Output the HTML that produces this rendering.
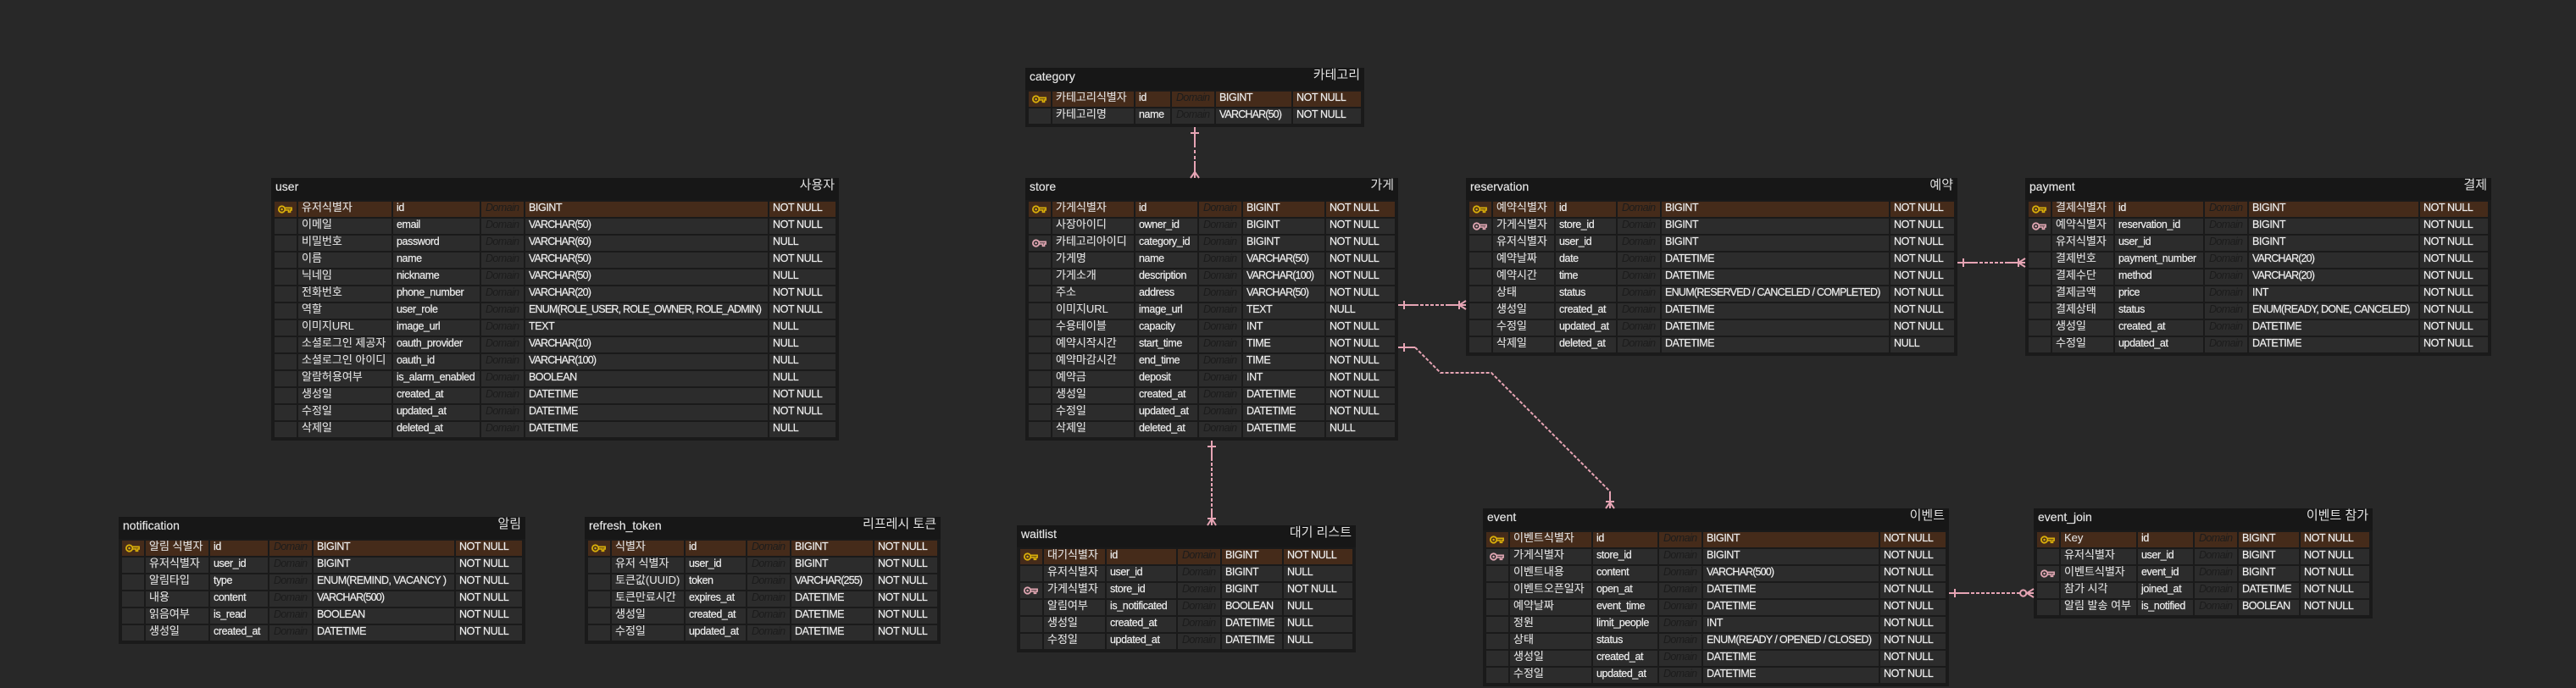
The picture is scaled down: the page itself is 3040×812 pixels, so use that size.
<!DOCTYPE html>
<html lang="ko"><head><meta charset="utf-8"><title>ERD</title>
<style>
html,body{margin:0;padding:0;width:3040px;height:812px;overflow:hidden;background:#282828}
body{position:relative;font-family:"Liberation Sans","Noto Sans CJK KR",sans-serif;color:#e2e2e2}
.e{position:absolute;background:#1a1a1a}
.e>b{position:absolute;left:5px;top:0;font-weight:400;font-size:14px;line-height:20px;color:#e6e6e6;-webkit-text-stroke:.15px #e6e6e6}
.e>i{position:absolute;right:5px;top:-1px;font-style:normal;font-size:15px;line-height:20px;color:#e0e0e0}
.e::before{content:"";position:absolute;left:0;top:0;right:0;height:26px;background:#171717}
.e>b,.e>i{z-index:1}
table{position:absolute;left:2px;top:26px;width:calc(100% - 4px);table-layout:fixed;border-collapse:separate;border-spacing:2px}
td{height:18px;padding:0 0 0 4px;background:#2c2c2c;font-size:12.5px;line-height:14px;letter-spacing:-.4px;white-space:nowrap;overflow:hidden;vertical-align:top;color:#ececec;-webkit-text-stroke:.2px #ececec}
td:nth-child(1){padding:0;position:relative;-webkit-text-stroke:0}
td:nth-child(2){font-size:13px;letter-spacing:0;color:#e0e0e0;-webkit-text-stroke:.1px #e0e0e0}
td:nth-child(4){padding-left:5px;font-style:italic;color:#1c1c1c;letter-spacing:-.6px;-webkit-text-stroke:0}
td.v{letter-spacing:-.85px}
td.a{letter-spacing:-.55px}
tr.p td{background:#452b1a}
td svg{position:absolute;left:4px;top:4px;width:17px;height:10px;display:block}
#ln{position:absolute;left:0;top:0}
</style></head><body>
<svg width="0" height="0" style="position:absolute"><defs>
<g id="k"><circle cx="4.6" cy="5" r="3.7" fill="none" stroke="currentColor" stroke-width="1.8"/><circle cx="4.6" cy="5" r="1.3" fill="currentColor"/><path d="M8.4 3.2H16.2V6H14.6V8.4H12.4V6H8.4" fill="currentColor" fill-opacity=".35" stroke="currentColor" stroke-width="1.5"/></g>
</defs></svg>

<div class="e" style="left:1210px;top:80px;width:400px;height:70px"><b>category</b><i>카테고리</i>
<table><col width="26"><col width="96"><col width="41"><col width="50"><col width="89"><col width="80">
<tr class="p"><td><svg viewBox="0 0 17 10" style="color:#d9ae0a"><use href="#k"/></svg></td><td>카테고리식별자</td><td>id</td><td>Domain</td><td>BIGINT</td><td>NOT NULL</td></tr>
<tr><td></td><td>카테고리명</td><td>name</td><td>Domain</td><td class="v">VARCHAR(50)</td><td>NOT NULL</td></tr>
</table></div>

<div class="e" style="left:320px;top:210px;width:670px;height:310px"><b>user</b><i>사용자</i>
<table><col width="26"><col width="110"><col width="102"><col width="50"><col width="286"><col width="78">
<tr class="p"><td><svg viewBox="0 0 17 10" style="color:#d9ae0a"><use href="#k"/></svg></td><td>유저식별자</td><td>id</td><td>Domain</td><td>BIGINT</td><td>NOT NULL</td></tr>
<tr><td></td><td>이메일</td><td>email</td><td>Domain</td><td class="v">VARCHAR(50)</td><td>NOT NULL</td></tr>
<tr><td></td><td>비밀번호</td><td>password</td><td>Domain</td><td class="v">VARCHAR(60)</td><td>NULL</td></tr>
<tr><td></td><td>이름</td><td>name</td><td>Domain</td><td class="v">VARCHAR(50)</td><td>NOT NULL</td></tr>
<tr><td></td><td>닉네임</td><td>nickname</td><td>Domain</td><td class="v">VARCHAR(50)</td><td>NULL</td></tr>
<tr><td></td><td>전화번호</td><td>phone_number</td><td>Domain</td><td class="v">VARCHAR(20)</td><td>NOT NULL</td></tr>
<tr><td></td><td>역할</td><td>user_role</td><td>Domain</td><td style="letter-spacing:-.79px">ENUM(ROLE_USER, ROLE_OWNER, ROLE_ADMIN)</td><td>NOT NULL</td></tr>
<tr><td></td><td>이미지URL</td><td>image_url</td><td>Domain</td><td>TEXT</td><td>NULL</td></tr>
<tr><td></td><td>소셜로그인 제공자</td><td>oauth_provider</td><td>Domain</td><td class="v">VARCHAR(10)</td><td>NULL</td></tr>
<tr><td></td><td>소셜로그인 아이디</td><td>oauth_id</td><td>Domain</td><td class="v">VARCHAR(100)</td><td>NULL</td></tr>
<tr><td></td><td>알람허용여부</td><td>is_alarm_enabled</td><td>Domain</td><td class="a">BOOLEAN</td><td>NULL</td></tr>
<tr><td></td><td>생성일</td><td>created_at</td><td>Domain</td><td class="a">DATETIME</td><td>NOT NULL</td></tr>
<tr><td></td><td>수정일</td><td>updated_at</td><td>Domain</td><td class="a">DATETIME</td><td>NOT NULL</td></tr>
<tr><td></td><td>삭제일</td><td>deleted_at</td><td>Domain</td><td class="a">DATETIME</td><td>NULL</td></tr>
</table></div>

<div class="e" style="left:1210px;top:210px;width:440px;height:310px"><b>store</b><i>가게</i>
<table><col width="26"><col width="96"><col width="73"><col width="50"><col width="96"><col width="81">
<tr class="p"><td><svg viewBox="0 0 17 10" style="color:#d9ae0a"><use href="#k"/></svg></td><td>가게식별자</td><td>id</td><td>Domain</td><td>BIGINT</td><td>NOT NULL</td></tr>
<tr><td></td><td>사장아이디</td><td>owner_id</td><td>Domain</td><td>BIGINT</td><td>NOT NULL</td></tr>
<tr><td><svg viewBox="0 0 17 10" style="color:#e0a6b2"><use href="#k"/></svg></td><td>카테고리아이디</td><td>category_id</td><td>Domain</td><td>BIGINT</td><td>NOT NULL</td></tr>
<tr><td></td><td>가게명</td><td>name</td><td>Domain</td><td class="v">VARCHAR(50)</td><td>NOT NULL</td></tr>
<tr><td></td><td>가게소개</td><td>description</td><td>Domain</td><td class="v">VARCHAR(100)</td><td>NOT NULL</td></tr>
<tr><td></td><td>주소</td><td>address</td><td>Domain</td><td class="v">VARCHAR(50)</td><td>NOT NULL</td></tr>
<tr><td></td><td>이미지URL</td><td>image_url</td><td>Domain</td><td>TEXT</td><td>NULL</td></tr>
<tr><td></td><td>수용테이블</td><td>capacity</td><td>Domain</td><td>INT</td><td>NOT NULL</td></tr>
<tr><td></td><td>예약시작시간</td><td>start_time</td><td>Domain</td><td>TIME</td><td>NOT NULL</td></tr>
<tr><td></td><td>예약마감시간</td><td>end_time</td><td>Domain</td><td>TIME</td><td>NOT NULL</td></tr>
<tr><td></td><td>예약금</td><td>deposit</td><td>Domain</td><td>INT</td><td>NOT NULL</td></tr>
<tr><td></td><td>생성일</td><td>created_at</td><td>Domain</td><td class="a">DATETIME</td><td>NOT NULL</td></tr>
<tr><td></td><td>수정일</td><td>updated_at</td><td>Domain</td><td class="a">DATETIME</td><td>NOT NULL</td></tr>
<tr><td></td><td>삭제일</td><td>deleted_at</td><td>Domain</td><td class="a">DATETIME</td><td>NULL</td></tr>
</table></div>

<div class="e" style="left:1730px;top:210px;width:580px;height:210px"><b>reservation</b><i>예약</i>
<table><col width="26"><col width="72"><col width="71"><col width="50"><col width="268"><col width="75">
<tr class="p"><td><svg viewBox="0 0 17 10" style="color:#d9ae0a"><use href="#k"/></svg></td><td>예약식별자</td><td>id</td><td>Domain</td><td>BIGINT</td><td>NOT NULL</td></tr>
<tr><td><svg viewBox="0 0 17 10" style="color:#e0a6b2"><use href="#k"/></svg></td><td>가게식별자</td><td>store_id</td><td>Domain</td><td>BIGINT</td><td>NOT NULL</td></tr>
<tr><td></td><td>유저식별자</td><td>user_id</td><td>Domain</td><td>BIGINT</td><td>NOT NULL</td></tr>
<tr><td></td><td>예약날짜</td><td>date</td><td>Domain</td><td class="a">DATETIME</td><td>NOT NULL</td></tr>
<tr><td></td><td>예약시간</td><td>time</td><td>Domain</td><td class="a">DATETIME</td><td>NOT NULL</td></tr>
<tr><td></td><td>상태</td><td>status</td><td>Domain</td><td style="letter-spacing:-.72px">ENUM(RESERVED / CANCELED / COMPLETED)</td><td>NOT NULL</td></tr>
<tr><td></td><td>생성일</td><td>created_at</td><td>Domain</td><td class="a">DATETIME</td><td>NOT NULL</td></tr>
<tr><td></td><td>수정일</td><td>updated_at</td><td>Domain</td><td class="a">DATETIME</td><td>NOT NULL</td></tr>
<tr><td></td><td>삭제일</td><td>deleted_at</td><td>Domain</td><td class="a">DATETIME</td><td>NULL</td></tr>
</table></div>

<div class="e" style="left:2390px;top:210px;width:550px;height:210px"><b>payment</b><i>결제</i>
<table><col width="26"><col width="72"><col width="104"><col width="50"><col width="200"><col width="80">
<tr class="p"><td><svg viewBox="0 0 17 10" style="color:#d9ae0a"><use href="#k"/></svg></td><td>결제식별자</td><td>id</td><td>Domain</td><td>BIGINT</td><td>NOT NULL</td></tr>
<tr><td><svg viewBox="0 0 17 10" style="color:#e0a6b2"><use href="#k"/></svg></td><td>예약식별자</td><td>reservation_id</td><td>Domain</td><td>BIGINT</td><td>NOT NULL</td></tr>
<tr><td></td><td>유저식별자</td><td>user_id</td><td>Domain</td><td>BIGINT</td><td>NOT NULL</td></tr>
<tr><td></td><td>결제번호</td><td>payment_number</td><td>Domain</td><td class="v">VARCHAR(20)</td><td>NOT NULL</td></tr>
<tr><td></td><td>결제수단</td><td>method</td><td>Domain</td><td class="v">VARCHAR(20)</td><td>NOT NULL</td></tr>
<tr><td></td><td>결제금액</td><td>price</td><td>Domain</td><td>INT</td><td>NOT NULL</td></tr>
<tr><td></td><td>결제상태</td><td>status</td><td>Domain</td><td style="letter-spacing:-.7px">ENUM(READY, DONE, CANCELED)</td><td>NOT NULL</td></tr>
<tr><td></td><td>생성일</td><td>created_at</td><td>Domain</td><td class="a">DATETIME</td><td>NOT NULL</td></tr>
<tr><td></td><td>수정일</td><td>updated_at</td><td>Domain</td><td class="a">DATETIME</td><td>NOT NULL</td></tr>
</table></div>

<div class="e" style="left:140px;top:610px;width:480px;height:150px"><b>notification</b><i>알림</i>
<table><col width="26"><col width="74"><col width="68"><col width="50"><col width="166"><col width="78">
<tr class="p"><td><svg viewBox="0 0 17 10" style="color:#d9ae0a"><use href="#k"/></svg></td><td>알림 식별자</td><td>id</td><td>Domain</td><td>BIGINT</td><td>NOT NULL</td></tr>
<tr><td></td><td>유저식별자</td><td>user_id</td><td>Domain</td><td>BIGINT</td><td>NOT NULL</td></tr>
<tr><td></td><td>알림타입</td><td>type</td><td>Domain</td><td style="letter-spacing:-.53px">ENUM(REMIND, VACANCY )</td><td>NOT NULL</td></tr>
<tr><td></td><td>내용</td><td>content</td><td>Domain</td><td class="v">VARCHAR(500)</td><td>NOT NULL</td></tr>
<tr><td></td><td>읽음여부</td><td>is_read</td><td>Domain</td><td class="a">BOOLEAN</td><td>NOT NULL</td></tr>
<tr><td></td><td>생성일</td><td>created_at</td><td>Domain</td><td class="a">DATETIME</td><td>NOT NULL</td></tr>
</table></div>

<div class="e" style="left:690px;top:610px;width:420px;height:150px"><b>refresh_token</b><i>리프레시 토큰</i>
<table><col width="26"><col width="85"><col width="71"><col width="50"><col width="96"><col width="74">
<tr class="p"><td><svg viewBox="0 0 17 10" style="color:#d9ae0a"><use href="#k"/></svg></td><td>식별자</td><td>id</td><td>Domain</td><td>BIGINT</td><td>NOT NULL</td></tr>
<tr><td></td><td>유저 식별자</td><td>user_id</td><td>Domain</td><td>BIGINT</td><td>NOT NULL</td></tr>
<tr><td></td><td>토큰값(UUID)</td><td>token</td><td>Domain</td><td class="v">VARCHAR(255)</td><td>NOT NULL</td></tr>
<tr><td></td><td>토큰만료시간</td><td>expires_at</td><td>Domain</td><td class="a">DATETIME</td><td>NOT NULL</td></tr>
<tr><td></td><td>생성일</td><td>created_at</td><td>Domain</td><td class="a">DATETIME</td><td>NOT NULL</td></tr>
<tr><td></td><td>수정일</td><td>updated_at</td><td>Domain</td><td class="a">DATETIME</td><td>NOT NULL</td></tr>
</table></div>

<div class="e" style="left:1200px;top:620px;width:400px;height:150px"><b>waitlist</b><i>대기 리스트</i>
<table><col width="26"><col width="72"><col width="82"><col width="50"><col width="71"><col width="81">
<tr class="p"><td><svg viewBox="0 0 17 10" style="color:#d9ae0a"><use href="#k"/></svg></td><td>대기식별자</td><td>id</td><td>Domain</td><td>BIGINT</td><td>NOT NULL</td></tr>
<tr><td></td><td>유저식별자</td><td>user_id</td><td>Domain</td><td>BIGINT</td><td>NULL</td></tr>
<tr><td><svg viewBox="0 0 17 10" style="color:#e0a6b2"><use href="#k"/></svg></td><td>가게식별자</td><td>store_id</td><td>Domain</td><td>BIGINT</td><td>NOT NULL</td></tr>
<tr><td></td><td>알림여부</td><td>is_notificated</td><td>Domain</td><td class="a">BOOLEAN</td><td>NULL</td></tr>
<tr><td></td><td>생성일</td><td>created_at</td><td>Domain</td><td class="a">DATETIME</td><td>NULL</td></tr>
<tr><td></td><td>수정일</td><td>updated_at</td><td>Domain</td><td class="a">DATETIME</td><td>NULL</td></tr>
</table></div>

<div class="e" style="left:1750px;top:600px;width:550px;height:210px"><b>event</b><i>이벤트</i>
<table><col width="26"><col width="96"><col width="76"><col width="50"><col width="207"><col width="77">
<tr class="p"><td><svg viewBox="0 0 17 10" style="color:#d9ae0a"><use href="#k"/></svg></td><td>이벤트식별자</td><td>id</td><td>Domain</td><td>BIGINT</td><td>NOT NULL</td></tr>
<tr><td><svg viewBox="0 0 17 10" style="color:#e0a6b2"><use href="#k"/></svg></td><td>가게식별자</td><td>store_id</td><td>Domain</td><td>BIGINT</td><td>NOT NULL</td></tr>
<tr><td></td><td>이벤트내용</td><td>content</td><td>Domain</td><td class="v">VARCHAR(500)</td><td>NOT NULL</td></tr>
<tr><td></td><td>이벤트오픈일자</td><td>open_at</td><td>Domain</td><td class="a">DATETIME</td><td>NOT NULL</td></tr>
<tr><td></td><td>예약날짜</td><td>event_time</td><td>Domain</td><td class="a">DATETIME</td><td>NOT NULL</td></tr>
<tr><td></td><td>정원</td><td>limit_people</td><td>Domain</td><td>INT</td><td>NOT NULL</td></tr>
<tr><td></td><td>상태</td><td>status</td><td>Domain</td><td style="letter-spacing:-.64px">ENUM(READY / OPENED / CLOSED)</td><td>NOT NULL</td></tr>
<tr><td></td><td>생성일</td><td>created_at</td><td>Domain</td><td class="a">DATETIME</td><td>NOT NULL</td></tr>
<tr><td></td><td>수정일</td><td>updated_at</td><td>Domain</td><td class="a">DATETIME</td><td>NOT NULL</td></tr>
</table></div>

<div class="e" style="left:2400px;top:600px;width:400px;height:130px"><b>event_join</b><i>이벤트 참가</i>
<table><col width="26"><col width="89"><col width="65"><col width="50"><col width="71"><col width="81">
<tr class="p"><td><svg viewBox="0 0 17 10" style="color:#d9ae0a"><use href="#k"/></svg></td><td>Key</td><td>id</td><td>Domain</td><td>BIGINT</td><td>NOT NULL</td></tr>
<tr><td></td><td>유저식별자</td><td>user_id</td><td>Domain</td><td>BIGINT</td><td>NOT NULL</td></tr>
<tr><td><svg viewBox="0 0 17 10" style="color:#e0a6b2"><use href="#k"/></svg></td><td>이벤트식별자</td><td>event_id</td><td>Domain</td><td>BIGINT</td><td>NOT NULL</td></tr>
<tr><td></td><td>참가 시각</td><td>joined_at</td><td>Domain</td><td class="a">DATETIME</td><td>NOT NULL</td></tr>
<tr><td></td><td>알림 발송 여부</td><td>is_notified</td><td>Domain</td><td class="a">BOOLEAN</td><td>NOT NULL</td></tr>
</table></div>

<svg id="ln" width="3040" height="812" fill="none" stroke="#e6a4b4" stroke-width="2">
<!-- category-store -->
<path d="M1410 150V170M1410 190V210M1405 157H1415M1405 210L1410 203L1415 210"/>
<path d="M1410 170V190" stroke-dasharray="4 3"/>
<!-- store-reservation -->
<path d="M1650 360H1670M1710 360H1730M1657 355V365M1722 355V365M1730 355L1722 360L1730 365"/>
<path d="M1670 360H1710" stroke-dasharray="4 2"/>
<!-- reservation-payment -->
<path d="M2310 310H2330M2370 310H2390M2317 305V315M2382 305V315M2390 305L2382 310L2390 315"/>
<path d="M2330 310H2370" stroke-dasharray="4 2"/>
<!-- store-event -->
<path d="M1650 410H1670M1657 405V415M1900 580V600M1895 592H1905M1895 600L1900 593L1905 600"/>
<path d="M1670 410L1700 440H1760L1900 580" stroke-dasharray="4 2"/>
<!-- store-waitlist -->
<path d="M1430 520V540M1430 600V620M1425 527H1435M1425 612H1435M1425 620L1430 612L1435 620"/>
<path d="M1430 540V600" stroke-dasharray="4 2"/>
<!-- event-event_join -->
<path d="M2300 700H2320M2307 695V705M2380 700H2384"/>
<path d="M2320 700H2380" stroke-dasharray="4 2"/>
<circle cx="2387.7" cy="700" r="3.6"/>
<path d="M2400 695L2392 700L2400 705M2392 700H2400"/>
</svg>
</body></html>
